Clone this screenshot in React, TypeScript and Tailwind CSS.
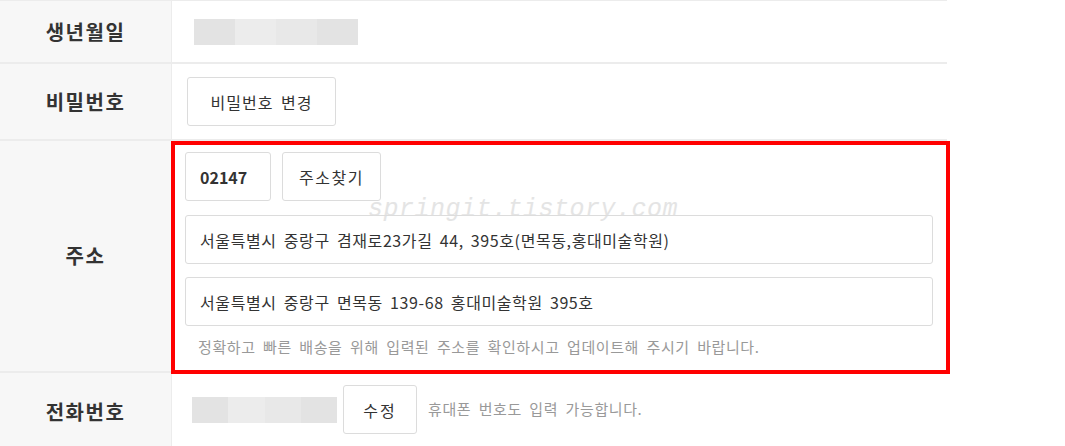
const font = { fontFamily: "'Noto Sans CJK KR', 'Noto Sans', sans-serif" };

function Blur({ width }: { width: number }) {
  const tones = ['bg-[#e3e3e3]', 'bg-[#ececec]', 'bg-[#e8e8e8]', 'bg-[#e3e3e3]'];
  return (
    <div className="flex h-[26px]" style={{ width }}>
      {tones.map((t, i) => (
        <div key={i} className={`flex-1 ${t}`} />
      ))}
    </div>
  );
}

function Row({ label, className, children }: { label: string; className: string; children: React.ReactNode }) {
  return (
    <div className={`flex border-b-2 border-[#ececec] ${className}`}>
      <div className="w-[172px] shrink-0 flex items-center justify-center bg-[#f7f7f7] border-r border-[#ececec]">
        <span className="text-[20px] font-bold tracking-[1.5px] text-[#333]">{label}</span>
      </div>
      <div className="flex-1 min-w-0">{children}</div>
    </div>
  );
}

export default function App() {
  return (
    <div className="relative w-[1065px] h-[446px] overflow-hidden bg-white" style={font}>
      <div className="w-[947px] border-t border-[#ececec]">
        <Row label="생년월일" className="h-[63px]">
          <div className="h-full flex items-center pl-[22px]">
            <Blur width={164} />
          </div>
        </Row>

        <Row label="비밀번호" className="h-[77px]">
          <div className="h-full flex items-center pl-[15px]">
            <button className="h-[49px] w-[149px] border border-[#dcdcdc] rounded-[3px] bg-white text-[16px] tracking-[1px] [word-spacing:3px] text-[#333]">
              비밀번호 변경
            </button>
          </div>
        </Row>

        <Row label="주소" className="h-[232px]">
          <div className="pl-[13px] pr-[14px] pt-[11px] flex flex-col">
            <div className="flex gap-[11px]">
              <div className="h-[49px] w-[86px] border border-[#dcdcdc] rounded-[3px] flex items-center pl-[14px] text-[16px] font-bold text-[#333]">
                02147
              </div>
              <button className="h-[49px] w-[99px] border border-[#dcdcdc] rounded-[3px] bg-white text-[16px] tracking-[1.5px] text-[#333]">
                주소찾기
              </button>
            </div>
            <div className="mt-[14px] h-[49px] border border-[#dcdcdc] rounded-[3px] flex items-center pl-[14px] text-[16px] tracking-[0.6px] [word-spacing:3px] text-[#333]">
              서울특별시 중랑구 겸재로23가길 44, 395호(면목동,홍대미술학원)
            </div>
            <div className="mt-[13px] h-[49px] border border-[#dcdcdc] rounded-[3px] flex items-center pl-[14px] text-[16px] tracking-[0.6px] [word-spacing:3px] text-[#333]">
              서울특별시 중랑구 면목동 139-68 홍대미술학원 395호
            </div>
            <p className="mt-[10px] pl-[13px] text-[15px] tracking-[0.6px] [word-spacing:3.5px] text-[#999]">
              정확하고 빠른 배송을 위해 입력된 주소를 확인하시고 업데이트해 주시기 바랍니다.
            </p>
          </div>
        </Row>

        <Row label="전화번호" className="h-[80px]">
          <div className="pt-[12px] pl-[20px] flex items-center">
            <Blur width={145} />
            <button className="ml-[6px] h-[49px] w-[74px] border border-[#dcdcdc] rounded-[3px] bg-white text-[16px] tracking-[2px] text-[#333]">
              수정
            </button>
            <span className="ml-[11px] text-[15px] tracking-[0.6px] [word-spacing:3.5px] text-[#999]">
              휴대폰 번호도 입력 가능합니다.
            </span>
          </div>
        </Row>
      </div>

      {/* watermark */}
      <div
        className="absolute left-[368px] top-[197px] text-[25px] leading-none italic tracking-[0.5px] text-[#dedede] opacity-80 pointer-events-none"
        style={{ fontFamily: "'Liberation Mono', monospace" }}
      >
        springit.tistory.com
      </div>

      {/* highlight box */}
      <div className="absolute left-[171px] top-[141px] w-[779px] h-[233px] border-4 border-[#ff0000] pointer-events-none" />
    </div>
  );
}
